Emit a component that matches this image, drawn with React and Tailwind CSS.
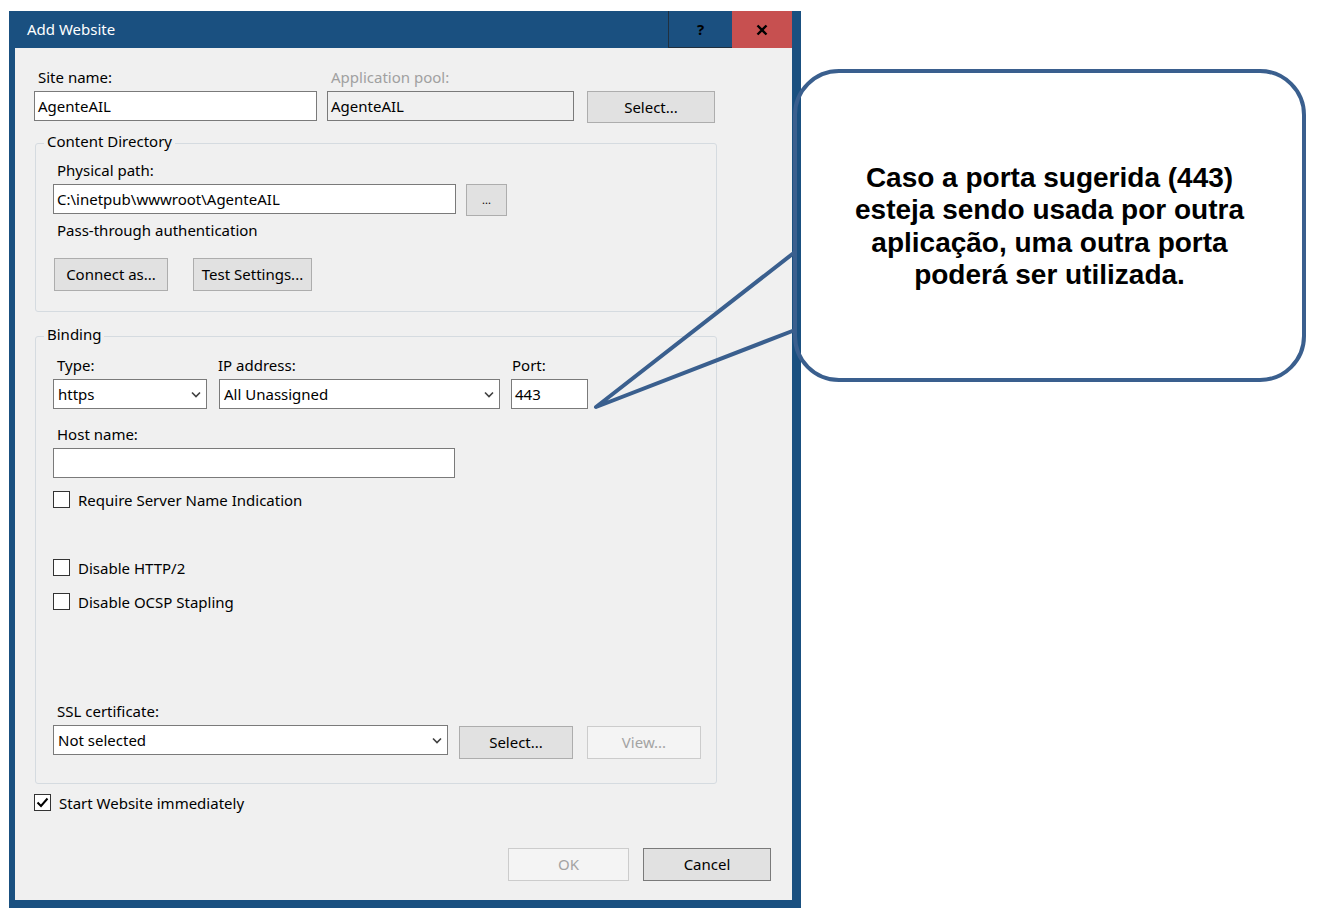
import React from 'react'

// Botões e campos no estilo Windows 10
function Btn({ children, className = '', disabled = false }) {
  return (
    <div
      className={`flex items-center justify-center border text-[15px] ${
        disabled
          ? 'border-[#cccccc] bg-[#f4f4f4] text-[#a3a3a3]'
          : 'border-[#adadad] bg-[#e1e1e1] text-black'
      } ${className}`}
    >
      {children}
    </div>
  )
}

function Campo({ value = '', className = '', disabled = false }) {
  return (
    <div
      className={`flex h-[30px] items-center border border-[#7a7a7a] px-[3px] text-[15px] text-black ${
        disabled ? 'bg-[#f0f0f0]' : 'bg-white'
      } ${className}`}
    >
      {value}
    </div>
  )
}

function Lista({ value, className = '' }) {
  return (
    <div className={`flex h-[30px] items-center justify-between border border-[#7a7a7a] bg-white pl-[4px] pr-[5px] text-[15px] text-black ${className}`}>
      <span>{value}</span>
      <svg width="10" height="7" viewBox="0 0 10 7">
        <path d="M1 1.5 L5 5.5 L9 1.5" fill="none" stroke="#404040" strokeWidth="1.6" />
      </svg>
    </div>
  )
}

function Caixa({ label, checked = false }) {
  return (
    <div className="flex h-[17px] items-center">
      <div className="flex h-[17px] w-[17px] items-center justify-center border border-[#333333] bg-white">
        {checked && (
          <svg width="13" height="11" viewBox="0 0 13 11">
            <path d="M1.5 5.5 L5 9 L11.5 1.5" fill="none" stroke="#000" strokeWidth="2" />
          </svg>
        )}
      </div>
      <span className="ml-[8px] text-[15px] leading-5 text-black">{label}</span>
    </div>
  )
}

// Groupbox: o título fica sobre a borda superior
function Grupo({ titulo, children, className = '' }) {
  return (
    <div className={`ml-px w-[682px] rounded-[3px] border border-[#d5dbe0] pl-[17px] ${className}`}>
      <span className="-ml-[9px] -mt-[13px] block w-fit bg-[#f0f0f0] px-[3px] text-[15px] leading-5 text-black">
        {titulo}
      </span>
      {children}
    </div>
  )
}

function Rotulo({ children, className = '' }) {
  return <div className={`h-5 text-[15px] leading-5 text-black ${className}`}>{children}</div>
}

export default function App() {
  return (
    <div className="relative h-[918px] w-[1333px] overflow-hidden bg-white font-['Noto_Sans',sans-serif]">
      {/* Janela Add Website */}
      <div className="ml-[9px] mt-[11px] flex h-[897px] w-[792px] flex-col bg-[#1a5080]">
        <div className="flex h-[37px] items-stretch">
          <div className="flex flex-1 items-center pb-px pl-[18px] text-[15px] text-white">Add Website</div>
          <div className="flex w-[64px] items-center justify-center border-b border-l border-[#20303f] bg-[#1b5080] text-[15px] font-bold text-black">
            ?
          </div>
          <div className="flex w-[60px] items-center justify-center bg-[#c75050]">
            <svg width="12" height="12" viewBox="0 0 12 12">
              <path d="M1.5 1.5 L10.5 10.5 M10.5 1.5 L1.5 10.5" stroke="#000" strokeWidth="2.4" />
            </svg>
          </div>
          <div className="w-[9px]" />
        </div>

        <div className="ml-[6px] h-[852px] w-[777px] bg-[#f0f0f0] pl-[19px] pt-[19px]">
          {/* Nome do site / pool */}
          <div className="flex items-start">
            <div className="w-[283px]">
              <Rotulo className="pl-1">Site name:</Rotulo>
              <Campo value="AgenteAIL" className="mt-1" />
            </div>
            <div className="ml-[10px] w-[247px]">
              <Rotulo className="pl-1 !text-[#a0a0a0]">Application pool:</Rotulo>
              <Campo value="AgenteAIL" className="mt-1" disabled />
            </div>
            <Btn className="ml-[13px] mt-6 h-[32px] w-[128px]">Select...</Btn>
          </div>

          {/* Content Directory */}
          <Grupo titulo="Content Directory" className="mt-[20px] pb-[20px]">
            <Rotulo className="mt-[9px] pl-1">Physical path:</Rotulo>
            <div className="mt-1 flex items-start">
              <Campo value="C:\inetpub\wwwroot\AgenteAIL" className="w-[403px]" />
              <Btn className="ml-[10px] h-[32px] w-[41px] !text-[11px]">...</Btn>
            </div>
            <Rotulo className="mt-[4px] pl-1">Pass-through authentication</Rotulo>
            <div className="mt-[18px] flex">
              <Btn className="ml-px h-[33px] w-[114px]">Connect as...</Btn>
              <Btn className="ml-[25px] h-[33px] w-[119px]">Test Settings...</Btn>
            </div>
          </Grupo>

          {/* Binding */}
          <Grupo titulo="Binding" className="mt-[24px] pb-[24px]">
            <div className="mt-[11px] flex items-start">
              <div className="w-[154px]">
                <Rotulo className="pl-1">Type:</Rotulo>
                <Lista value="https" className="mt-1" />
              </div>
              <div className="ml-[12px] w-[281px]">
                <Rotulo className="-ml-px">IP address:</Rotulo>
                <Lista value="All Unassigned" className="mt-1" />
              </div>
              <div className="ml-[11px] w-[77px]">
                <Rotulo className="pl-px">Port:</Rotulo>
                <Campo value="443" className="mt-1" />
              </div>
            </div>
            <Rotulo className="mt-[15px] pl-1">Host name:</Rotulo>
            <Campo className="mt-1 w-[402px]" />
            <div className="mt-[13px]">
              <Caixa label="Require Server Name Indication" />
            </div>
            <div className="mt-[51px]">
              <Caixa label="Disable HTTP/2" />
            </div>
            <div className="mt-[17px]">
              <Caixa label="Disable OCSP Stapling" />
            </div>
            <Rotulo className="mt-[91px] pl-1">SSL certificate:</Rotulo>
            <div className="mt-1 flex items-start">
              <Lista value="Not selected" className="w-[395px]" />
              <Btn className="ml-[11px] mt-px h-[33px] w-[114px]">Select...</Btn>
              <Btn className="ml-[14px] mt-px h-[33px] w-[114px]" disabled>View...</Btn>
            </div>
          </Grupo>

          <div className="mt-[10px]">
            <Caixa label="Start Website immediately" checked />
          </div>

          <div className="mr-[21px] mt-[37px] flex justify-end">
            <Btn className="h-[33px] w-[121px]" disabled>OK</Btn>
            <Btn className="ml-[14px] h-[33px] w-[128px] !border-[#7a7a7a]">Cancel</Btn>
          </div>
        </div>
      </div>

      {/* Balão explicativo */}
      <svg className="pointer-events-none absolute left-0 top-0" width="1333" height="918">
        <polyline
          points="795,252 596,407 795,330"
          fill="none"
          stroke="#3a5f8e"
          strokeWidth="4"
          strokeLinejoin="round"
        />
      </svg>
      <div className="absolute left-[793px] top-[69px] flex h-[313px] w-[513px] items-center justify-center rounded-[46px] border-4 border-[#3a5f8e] text-center font-['Liberation_Sans',Arial,sans-serif] text-[28px] font-bold leading-[32.5px] text-black">
        <p className="pt-[2px]">
          Caso a porta sugerida (443)
          <br />
          esteja sendo usada por outra
          <br />
          aplicação, uma outra porta
          <br />
          poderá ser utilizada.
        </p>
      </div>
    </div>
  )
}
